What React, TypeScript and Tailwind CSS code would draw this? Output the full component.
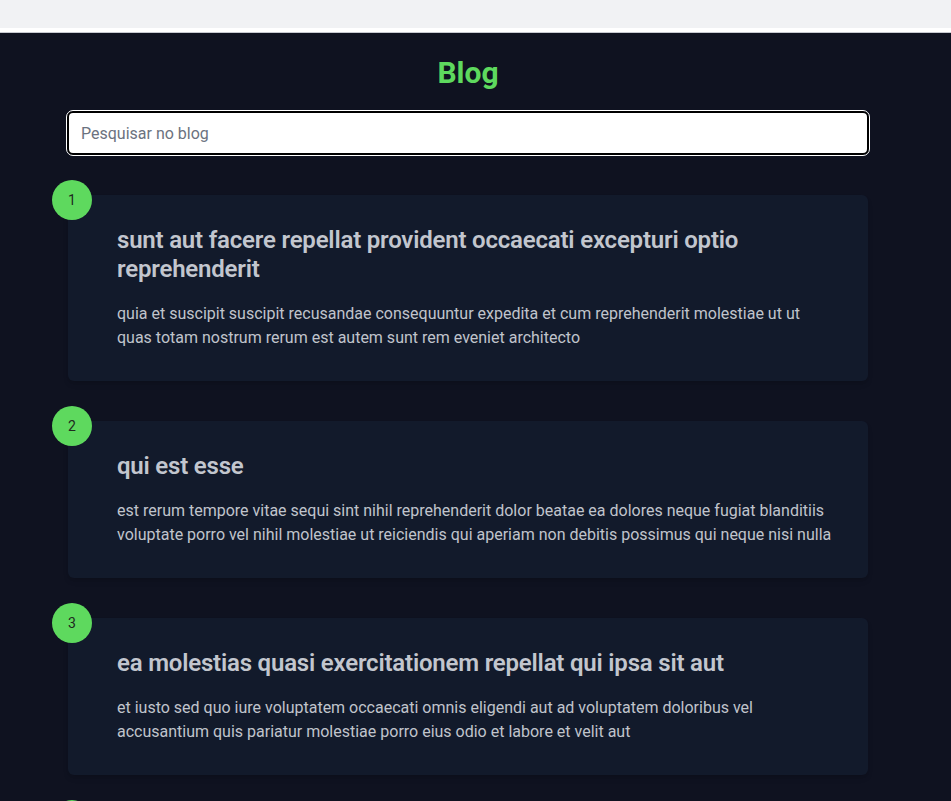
import React, { useState } from "react";

type Post = { id: number; title: string; body: string };

const posts: Post[] = [
  {
    id: 1,
    title:
      "sunt aut facere repellat provident occaecati excepturi optio reprehenderit",
    body: "quia et suscipit suscipit recusandae consequuntur expedita et cum reprehenderit molestiae ut ut quas totam nostrum rerum est autem sunt rem eveniet architecto",
  },
  {
    id: 2,
    title: "qui est esse",
    body: "est rerum tempore vitae sequi sint nihil reprehenderit dolor beatae ea dolores neque fugiat blanditiis voluptate porro vel nihil molestiae ut reiciendis qui aperiam non debitis possimus qui neque nisi nulla",
  },
  {
    id: 3,
    title: "ea molestias quasi exercitationem repellat qui ipsa sit aut",
    body: "et iusto sed quo iure voluptatem occaecati omnis eligendi aut ad voluptatem doloribus vel accusantium quis pariatur molestiae porro eius odio et labore et velit aut",
  },
  {
    id: 4,
    title: "eum et est occaecati",
    body: "ullam et saepe reiciendis voluptatem adipisci sit amet autem assumenda provident rerum culpa quis hic commodi nesciunt rem tenetur doloremque ipsam iure quis sunt voluptatem rerum illo velit",
  },
];

// cartão de cada post
const PostCard: React.FC<{ post: Post }> = ({ post }) => (
  <div className="relative rounded-md bg-[#121a2b] pb-[31px] pl-[49px] pr-[34px] pt-[31px] shadow-md">
    <span className="absolute -left-4 -top-[15px] flex h-10 w-10 items-center justify-center rounded-full bg-[#5ed95e] text-sm text-[#1f2a1f]">
      {post.id}
    </span>
    <h2 className="mb-[18px] text-2xl leading-[29px] font-semibold tracking-[-0.2px] text-[#c2c6ce]">
      {post.title}
    </h2>
    <p className="text-base leading-6 text-[#c0c4cc]">{post.body}</p>
  </div>
);

export default function App() {
  const [search, setSearch] = useState("");

  const filtered = posts.filter(
    (p) =>
      p.title.toLowerCase().includes(search.toLowerCase()) ||
      p.body.toLowerCase().includes(search.toLowerCase())
  );

  return (
    <div className="min-h-screen bg-[#0f1220] font-['Roboto',sans-serif]">
      <div className="h-[28px] bg-[#f1f2f4]" />
      <div className="h-[5px] border-b border-[#c8cad0] bg-white" />
      <div className="flex justify-center pr-[15px] pt-[22px]">
        <div className="w-[802px]">
          <h1 className="mb-5 text-center text-3xl font-bold text-[#5ed95e]">
            Blog
          </h1>
          <input
            type="text"
            value={search}
            onChange={(e) => setSearch(e.target.value)}
            placeholder="Pesquisar no blog"
            className="h-11 w-full rounded-md border-2 border-black bg-white px-3 text-base text-gray-800 outline outline-1 outline-white placeholder:text-[#6b7280]"
          />
          <div className="mt-10 flex flex-col gap-10 px-px pb-10">
            {filtered.map((post) => (
              <PostCard key={post.id} post={post} />
            ))}
          </div>
        </div>
      </div>
    </div>
  );
}
